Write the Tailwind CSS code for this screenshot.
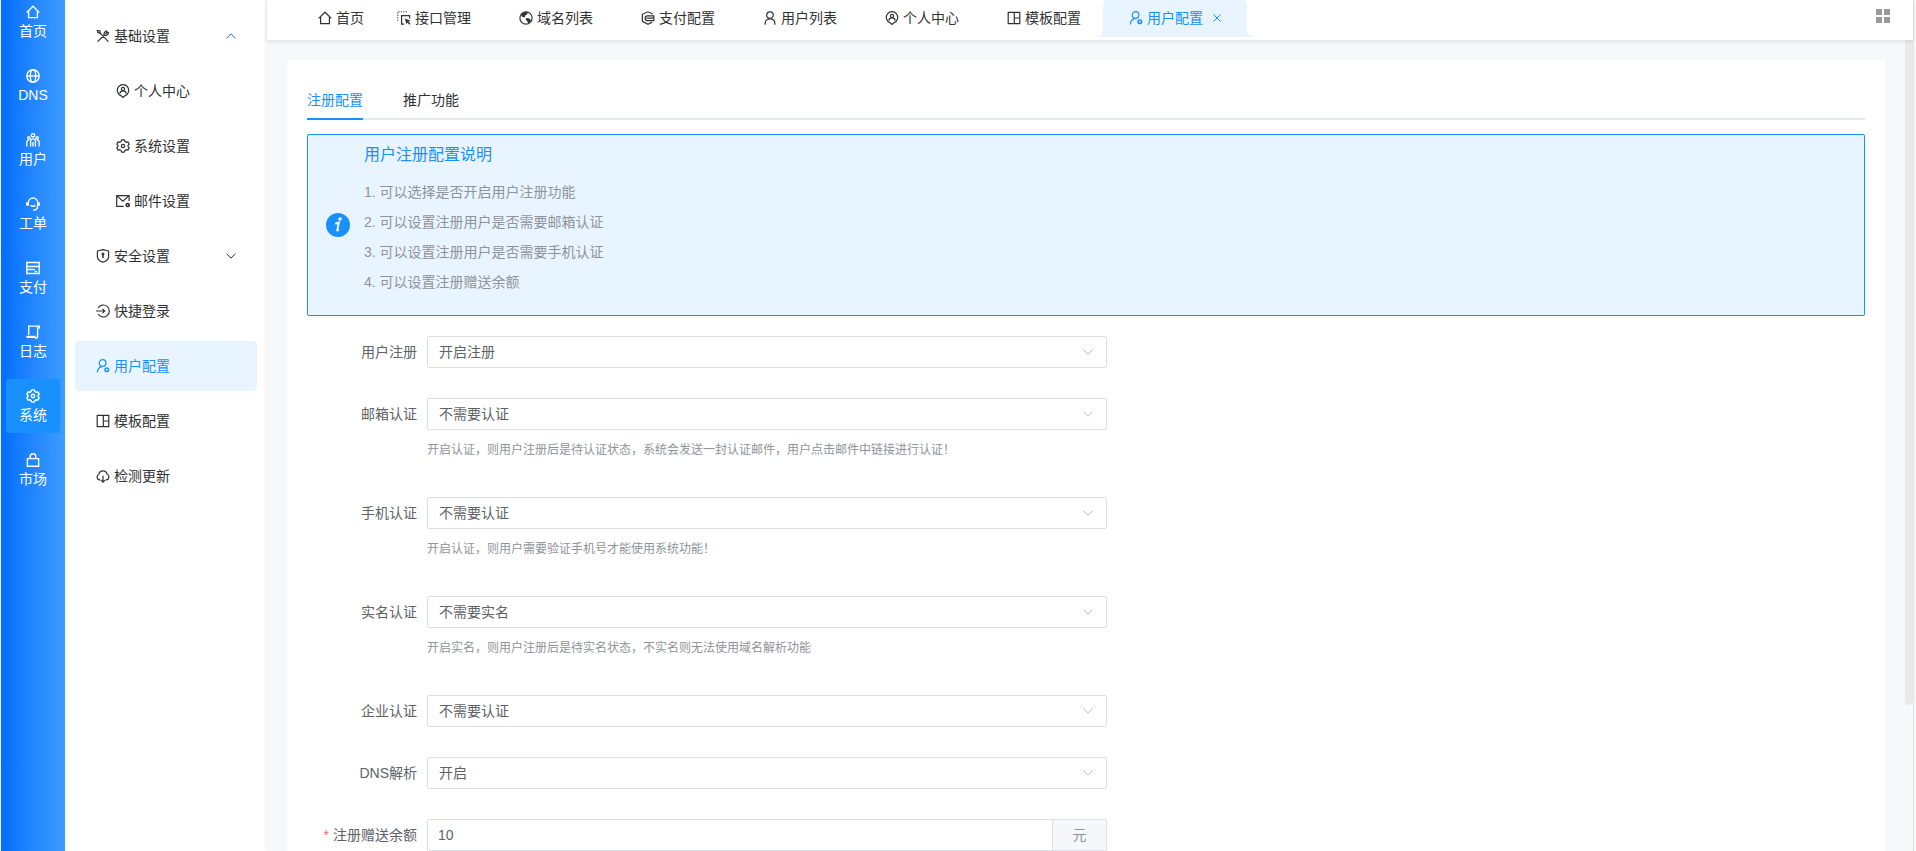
<!DOCTYPE html>
<html lang="zh">
<head>
    <meta charset="UTF-8">
    <meta name="viewport" content="width=device-width, initial-scale=1.0">
    <title>用户配置</title>
    <script src="https://cdn.jsdelivr.net/npm/@tailwindcss/browser@4"></script>
</head>
<body class="font-['Liberation_Sans','Noto_Sans_CJK_SC',sans-serif] text-sm text-[#303133] bg-white">

    <!-- 图标 -->
    <svg class="hidden">
        <symbol id="i-home" viewBox="0 0 14 14"><path d="M.7 7.4L7 1.2l6.300 6.200M2.600 5.800v6.800h8.800V5.800"/></symbol>
        <symbol id="i-globe" viewBox="0 0 14 14"><circle cx="7" cy="7" r="6.2"/><ellipse cx="7" cy="7" rx="2.7" ry="6.2"/><path d="M.8 7h12.4"/></symbol>
        <symbol id="i-users" viewBox="0 0 14 14"><circle cx="7" cy="2.300" r="1.700"/><circle cx="2.900" cy="4.900" r="1.200"/><circle cx="11.100" cy="4.900" r="1.200"/><path d="M4.600 13.600V8.300a2.400 2.400 0 0 1 4.800 0v5.300M7 9v4.600M.8 13.600V9.500c0-1.300.9-2.300 2.300-2.300M13.200 13.600V9.500c0-1.300-.9-2.300-2.300-2.300"/></symbol>
        <symbol id="i-service" viewBox="0 0 14 14"><path d="M2.3 8.800V5.700a4.700 4.700 0 0 1 9.400 0v3.100c0 2.400-1.700 4.300-4.400 4.400M4.600 8.200c1.200 1.300 3.600 1.300 4.800 0"/><path stroke-width="1.800" d="M1 5.200v3.600M13 5.200v3.600"/></symbol>
        <symbol id="i-card" viewBox="0 0 14 14"><path d="M.8 1.500h12.400v11H.8zM.8 5.500h12.400M.8 8.500h8M8.600 10.500h2.400"/></symbol>
        <symbol id="i-log" viewBox="0 0 14 14"><path d="M2.700 10V1.100h10.700v2.600M11.600 1.200v10.200c0 .9-.6 1.700-1.600 1.700"/><path stroke-width="2.200" d="M.4 11.900h9.200"/><path d="M9 13h1.500"/></symbol>
        <symbol id="i-gear" viewBox="0 0 14 14"><path stroke-linejoin="round" d="M5.6.9h2.8l.5 1.6 1.3.8 1.7-.4 1.3 2.4L12 6.4v1.2l1.2 1.1-1.3 2.4-1.7-.4-1.3.8-.5 1.6H5.6l-.5-1.6-1.3-.8-1.7.4L.8 8.7 2 7.6V6.4L.8 5.3l1.3-2.4 1.7.4 1.3-.8z"/><circle cx="7" cy="7" r="1.7"/></symbol>
        <symbol id="i-lock" viewBox="0 0 14 14"><path d="M1.400 5.600h11.200v7.700H1.400zM4.200 5.400V3.600a2.800 2.800 0 0 1 5.600 0v1.800"/></symbol>
        <symbol id="i-tools" viewBox="0 0 14 14"><path d="M3.600 3.600l8.800 9M1.600 12.600l6.600-6.400M8.200 6.200c-.8-1.900.6-4.300 3-4.300M8.200 6.200c1.900.8 4.400-.6 4.400-3M11.200 1.900L10 4.300l2.600-1.100M1.300 1.500l2.500.3.600 2.400-2.500-.5z"/></symbol>
        <symbol id="i-pin" viewBox="0 0 14 14"><path d="M4.800 11.600A5.700 5.700 0 1 1 9.200 11.600L7 13.500z"/><circle cx="7" cy="4.900" r="1.600"/><path d="M3.800 9.600c.4-3.600 6-3.600 6.400 0"/></symbol>
        <symbol id="i-mail" viewBox="0 0 14 14"><path d="M7.800 12.300H.7V1.600h12.400V7M.9 1.900l6 5.200 6-5.200"/><circle cx="11.700" cy="11" r="1.500" stroke-width="1.700"/></symbol>
        <symbol id="i-shield" viewBox="0 0 14 14"><path stroke-linejoin="round" d="M1.400 2L7 .7 12.600 2v6c0 2.600-2.600 4.200-5.600 5.300C4 12.200 1.400 10.600 1.400 8z"/><path d="M7 5v4" stroke-width="1.500"/><circle cx="7" cy="5" r=".9"/></symbol>
        <symbol id="i-login" viewBox="0 0 14 14"><path d="M2.100 4A6 6 0 1 1 2.100 10M0 7h8.400M6.500 4.900L8.700 7 6.500 9.100"/></symbol>
        <symbol id="i-userset" viewBox="0 0 14 14"><circle cx="6.600" cy="4" r="3.300"/><path d="M1.400 13.600c0-3.200 1.600-5.400 4.400-6"/><circle cx="10.800" cy="10.800" r="1.800" stroke-width="1.500"/></symbol>
        <symbol id="i-layout" viewBox="0 0 14 14"><path d="M1.200 1.400h11.600v11.200H1.200zM7.300 1.400v11.200M7.300 7h5.500"/></symbol>
        <symbol id="i-cloud" viewBox="0 0 14 14"><path d="M4.400 10.900H3.600A3 3 0 0 1 2.900 5.200a4.200 4.200 0 0 1 8.200 0A3 3 0 0 1 10.400 10.900H9.600M7 6.800v6.400M5 11.200l2 2 2-2"/></symbol>
        <symbol id="i-user" viewBox="0 0 14 14"><circle cx="7" cy="4.100" r="3.300"/><path d="M2.200 13.700V12c0-5.500 9.600-5.500 9.600 0v1.700"/></symbol>
        <symbol id="i-api" viewBox="0 0 14 14"><path stroke-dasharray="1.200 1.200" stroke-width="1" d="M.8 9.800V.8h9.600"/><path d="M7.200 13.200H4.600V4.600h8v2.800"/><path fill="currentColor" stroke="none" d="M7.800 7.400l6 2.300-2.300.9 2 2.100-1 1-2.100-2.100-.8 2z"/></symbol>
        <symbol id="i-earth" viewBox="0 0 14 14"><circle cx="7" cy="7" r="6.100"/><path fill="currentColor" stroke="none" d="M2 3.600C4 .6 7.500.6 9 1.200L8 3.500 6.400 4.200 6 6 4 6.300 2.800 5.500zM7.200 7l3.300.4 1.500 2-2.600 3.400-1.200-2.600L6.600 8.600z"/></symbol>
        <symbol id="i-pay" viewBox="0 0 14 14"><path d="M11.800 3L7 .8 1.400 3.300v7L7 13.300l4-2.200"/><path d="M12.800 4.800H6.200c-1.400 0-2 1-2 2.200s.6 2.600 2 2.600h6.600zM5.400 7.200h7.400"/></symbol>
        <symbol id="i-down" viewBox="0 0 10 10"><path d="M.5 2.600L5 7.200l4.500-4.600"/></symbol>
        <symbol id="i-close" viewBox="0 0 8 8"><path d="M.5.5l7 7M7.500.5l-7 7"/></symbol>
    </svg>

    <div class="flex h-screen overflow-hidden border-l border-[#e8ecf0] pr-[2px]">

        <!-- 一级菜单 -->
        <nav class="w-16 shrink-0 bg-linear-to-r from-[#006eff] to-[#3c9cff] text-white">
            <div class="-mt-[5px] flex flex-col items-center gap-[10px]">
                <a href="#" class="flex w-[54px] h-[54px] flex-col items-center justify-center rounded gap-[2px] pt-[2px]"><svg class="size-[14px] fill-none stroke-current stroke-[1.4]"><use href="#i-home"/></svg><span class="leading-5">首页</span></a>
                <a href="#" class="flex w-[54px] h-[54px] flex-col items-center justify-center rounded gap-[2px] pt-[2px]"><svg class="size-[14px] fill-none stroke-current stroke-[1.4]"><use href="#i-globe"/></svg><span class="leading-5">DNS</span></a>
                <a href="#" class="flex w-[54px] h-[54px] flex-col items-center justify-center rounded gap-[2px] pt-[2px]"><svg class="size-[14px] fill-none stroke-current stroke-[1.3]"><use href="#i-users"/></svg><span class="leading-5">用户</span></a>
                <a href="#" class="flex w-[54px] h-[54px] flex-col items-center justify-center rounded gap-[2px] pt-[2px]"><svg class="size-[14px] fill-none stroke-current stroke-[1.4]"><use href="#i-service"/></svg><span class="leading-5">工单</span></a>
                <a href="#" class="flex w-[54px] h-[54px] flex-col items-center justify-center rounded gap-[2px] pt-[2px]"><svg class="size-[14px] fill-none stroke-current stroke-[1.4]"><use href="#i-card"/></svg><span class="leading-5">支付</span></a>
                <a href="#" class="flex w-[54px] h-[54px] flex-col items-center justify-center rounded gap-[2px] pt-[2px]"><svg class="size-[14px] fill-none stroke-current stroke-[1.4]"><use href="#i-log"/></svg><span class="leading-5">日志</span></a>
                <a href="#" class="flex w-[54px] h-[54px] flex-col items-center justify-center rounded gap-[2px] pt-[2px] bg-[#1890ff]"><svg class="size-[14px] fill-none stroke-current stroke-[1.4]"><use href="#i-gear"/></svg><span class="leading-5">系统</span></a>
                <a href="#" class="flex w-[54px] h-[54px] flex-col items-center justify-center rounded gap-[2px] pt-[2px]"><svg class="size-[14px] fill-none stroke-current stroke-[1.4]"><use href="#i-lock"/></svg><span class="leading-5">市场</span></a>
            </div>
        </nav>

        <!-- 二级菜单 -->
        <aside class="w-[202px] shrink-0 bg-white px-[10px] pt-[11px]">
            <ul class="flex flex-col gap-[5px]">
                <li><a href="#" class="flex h-[50px] items-center gap-1 rounded pr-[21px] pl-[21px]"><svg class="size-[14px] fill-none stroke-current stroke-[1.2]"><use href="#i-tools"/></svg><span>基础设置</span><svg class="ml-auto size-[10px] rotate-180 fill-none stroke-[#1a6fd0]"><use href="#i-down"/></svg></a></li>
                <li><a href="#" class="flex h-[50px] items-center gap-1 rounded pl-[41px]"><svg class="size-[14px] fill-none stroke-current stroke-[1.2]"><use href="#i-pin"/></svg><span>个人中心</span></a></li>
                <li><a href="#" class="flex h-[50px] items-center gap-1 rounded pl-[41px]"><svg class="size-[14px] fill-none stroke-current stroke-[1.2]"><use href="#i-gear"/></svg><span>系统设置</span></a></li>
                <li><a href="#" class="flex h-[50px] items-center gap-1 rounded pl-[41px]"><svg class="size-[14px] fill-none stroke-current stroke-[1.2]"><use href="#i-mail"/></svg><span>邮件设置</span></a></li>
                <li><a href="#" class="flex h-[50px] items-center gap-1 rounded pr-[21px] pl-[21px]"><svg class="size-[14px] fill-none stroke-current stroke-[1.2]"><use href="#i-shield"/></svg><span>安全设置</span><svg class="ml-auto size-[10px] fill-none stroke-current"><use href="#i-down"/></svg></a></li>
                <li><a href="#" class="flex h-[50px] items-center gap-1 rounded pl-[21px]"><svg class="size-[14px] fill-none stroke-current stroke-[1.2]"><use href="#i-login"/></svg><span>快捷登录</span></a></li>
                <li><a href="#" class="flex h-[50px] items-center gap-1 rounded bg-[#e8f4ff] pl-[21px] text-[#1890ff]"><svg class="size-[14px] fill-none stroke-current stroke-[1.2]"><use href="#i-userset"/></svg><span>用户配置</span></a></li>
                <li><a href="#" class="flex h-[50px] items-center gap-1 rounded pl-[21px]"><svg class="size-[14px] fill-none stroke-current stroke-[1.2]"><use href="#i-layout"/></svg><span>模板配置</span></a></li>
                <li><a href="#" class="flex h-[50px] items-center gap-1 rounded pl-[21px]"><svg class="size-[14px] fill-none stroke-current stroke-[1.2]"><use href="#i-cloud"/></svg><span>检测更新</span></a></li>
            </ul>
        </aside>

        <div class="flex min-w-0 flex-1 flex-col border-r border-[#e4e4e4] bg-[#f6f8fa] shadow-[0_0_4px_rgba(0,21,41,0.1)]">

            <!-- 顶部标签栏 -->
            <header class="relative z-10 flex h-10 shrink-0 items-start justify-between bg-white pr-[23px] pl-[51px] shadow-[0_1px_4px_rgba(0,21,41,0.12)]">
                <div class="flex gap-8 text-[#333]">
                    <a href="#" class="flex h-[37px] w-[47px] items-center gap-1 pb-[2px]"><svg class="size-[14px] fill-none stroke-current stroke-[1.2]"><use href="#i-home"/></svg><span>首页</span></a>
                    <a href="#" class="flex h-[37px] w-[90px] items-center gap-1 pb-[2px]"><svg class="size-[14px] fill-none stroke-current stroke-[1.2]"><use href="#i-api"/></svg><span>接口管理</span></a>
                    <a href="#" class="flex h-[37px] w-[90px] items-center gap-1 pb-[2px]"><svg class="size-[14px] fill-none stroke-current stroke-[1.2]"><use href="#i-earth"/></svg><span>域名列表</span></a>
                    <a href="#" class="flex h-[37px] w-[90px] items-center gap-1 pb-[2px]"><svg class="size-[14px] fill-none stroke-current stroke-[1.2]"><use href="#i-pay"/></svg><span>支付配置</span></a>
                    <a href="#" class="flex h-[37px] w-[90px] items-center gap-1 pb-[2px]"><svg class="size-[14px] fill-none stroke-current stroke-[1.2]"><use href="#i-user"/></svg><span>用户列表</span></a>
                    <a href="#" class="flex h-[37px] w-[90px] items-center gap-1 pb-[2px]"><svg class="size-[14px] fill-none stroke-current stroke-[1.2]"><use href="#i-pin"/></svg><span>个人中心</span></a>
                    <a href="#" class="flex h-[37px] w-[90px] items-center gap-1 pb-[2px]"><svg class="size-[14px] fill-none stroke-current stroke-[1.2]"><use href="#i-layout"/></svg><span>模板配置</span></a>
                    <div class="relative -mx-8 flex h-[37px] items-center px-8 pb-[2px] text-[#1890ff]">
                        <div class="absolute inset-x-[6px] -top-[2px] bottom-0 rounded-t-lg bg-[#e8f4ff]"></div>
                        <svg class="absolute bottom-0 left-0 size-[6px] fill-[#e8f4ff]" viewBox="0 0 6 6"><path d="M6 0v6H0V5C3 5 6 3 6 0z"/></svg>
                        <svg class="absolute right-0 bottom-0 size-[6px] fill-[#e8f4ff]" viewBox="0 0 6 6"><path d="M0 0v6h6V5C3 5 0 3 0 0z"/></svg>
                        <a href="#" class="relative flex items-center gap-1"><svg class="size-[14px] fill-none stroke-current stroke-[1.2]"><use href="#i-userset"/></svg><span>用户配置</span></a>
                        <button type="button" aria-label="关闭" class="relative ml-[10px]"><svg class="size-2 fill-none stroke-current"><use href="#i-close"/></svg></button>
                    </div>
                </div>
                <button type="button" aria-label="更多" class="mt-[9px] grid grid-cols-2 gap-[2px]">
                    <i class="size-[6px] bg-[#999]"></i><i class="size-[6px] bg-[#999]"></i>
                    <i class="size-[6px] bg-[#999]"></i><i class="size-[6px] bg-[#999]"></i>
                </button>
            </header>

            <!-- 内容区域 -->
            <div class="relative min-h-0 flex-1 overflow-hidden pt-5 pr-7 pl-5">
                <div class="absolute top-0 right-0 h-[82%] w-2 rounded-b bg-[#e9e9e9]"></div>

                <main class="bg-white p-5 pb-10">
                    <div class="flex h-10 gap-10 border-b-2 border-[#e4e7ed] leading-10">
                        <a href="#" class="h-10 border-b-2 border-[#1890ff] text-[#1890ff]">注册配置</a>
                        <a href="#" class="h-10">推广功能</a>
                    </div>

                    <!-- 说明 -->
                    <section class="mt-[14px] flex h-[182px] items-center gap-[14px] rounded-xs border border-[#1890ff] bg-[#e8f4ff] px-[18px] text-[#909399]">
                        <svg class="size-6 shrink-0" viewBox="0 0 24 24"><circle cx="12" cy="12" r="12" fill="#1890ff"/><circle cx="14" cy="6" r="1.700" fill="#fff"/><path d="M9.300 10.500c1.200-.3 2.400-.9 3.700-1L11.200 17c-.2 1 .7.600 1.700-.5M9.300 10.600h1.900" fill="none" stroke="#fff" stroke-width="1.800"/></svg>
                        <div class="h-full pt-2">
                            <h2 class="text-base text-[#1890ff]">用户注册配置说明</h2>
                            <ol class="mt-[10px] leading-[30px]">
                                <li>1. 可以选择是否开启用户注册功能</li>
                                <li>2. 可以设置注册用户是否需要邮箱认证</li>
                                <li>3. 可以设置注册用户是否需要手机认证</li>
                                <li>4. 可以设置注册赠送余额</li>
                            </ol>
                        </div>
                    </section>

                    <!-- 表单 -->
                    <form class="mt-5 flex max-w-[800px] flex-col gap-[30px] text-[#606266]">
                        <div class="flex">
                            <label for="reg" class="w-[120px] shrink-0 pr-[10px] text-right leading-8">用户注册</label>
                            <div class="relative flex-1">
                                <select id="reg" class="block h-8 w-full appearance-none rounded-xs border border-[#dcdfe6] bg-white px-[11px]"><option>开启注册</option></select>
                                <svg class="pointer-events-none absolute top-[11px] right-[14px] size-[10px] fill-none stroke-[#b4b8c0]"><use href="#i-down"/></svg>
                            </div>
                        </div>
                        <div class="flex">
                            <label for="mail" class="w-[120px] shrink-0 pr-[10px] text-right leading-8">邮箱认证</label>
                            <div class="relative flex-1">
                                <select id="mail" class="block h-8 w-full appearance-none rounded-xs border border-[#dcdfe6] bg-white px-[11px]"><option>不需要认证</option></select>
                                <svg class="pointer-events-none absolute top-[11px] right-[14px] size-[10px] fill-none stroke-[#b4b8c0]"><use href="#i-down"/></svg>
                                <p class="h-[37px] text-xs leading-10 text-[#909399]">开启认证，则用户注册后是待认证状态，系统会发送一封认证邮件，用户点击邮件中链接进行认证！</p>
                            </div>
                        </div>
                        <div class="flex">
                            <label for="phone" class="w-[120px] shrink-0 pr-[10px] text-right leading-8">手机认证</label>
                            <div class="relative flex-1">
                                <select id="phone" class="block h-8 w-full appearance-none rounded-xs border border-[#dcdfe6] bg-white px-[11px]"><option>不需要认证</option></select>
                                <svg class="pointer-events-none absolute top-[11px] right-[14px] size-[10px] fill-none stroke-[#b4b8c0]"><use href="#i-down"/></svg>
                                <p class="h-[37px] text-xs leading-10 text-[#909399]">开启认证，则用户需要验证手机号才能使用系统功能！</p>
                            </div>
                        </div>
                        <div class="flex">
                            <label for="real" class="w-[120px] shrink-0 pr-[10px] text-right leading-8">实名认证</label>
                            <div class="relative flex-1">
                                <select id="real" class="block h-8 w-full appearance-none rounded-xs border border-[#dcdfe6] bg-white px-[11px]"><option>不需要实名</option></select>
                                <svg class="pointer-events-none absolute top-[11px] right-[14px] size-[10px] fill-none stroke-[#b4b8c0]"><use href="#i-down"/></svg>
                                <p class="h-[37px] text-xs leading-10 text-[#909399]">开启实名，则用户注册后是待实名状态，不实名则无法使用域名解析功能</p>
                            </div>
                        </div>
                        <div class="flex">
                            <label for="company" class="w-[120px] shrink-0 pr-[10px] text-right leading-8">企业认证</label>
                            <div class="relative flex-1">
                                <select id="company" class="block h-8 w-full appearance-none rounded-xs border border-[#dcdfe6] bg-white px-[11px]"><option>不需要认证</option></select>
                                <svg class="pointer-events-none absolute top-[11px] right-[14px] size-[10px] fill-none stroke-[#b4b8c0]"><use href="#i-down"/></svg>
                            </div>
                        </div>
                        <div class="flex">
                            <label for="dns" class="w-[120px] shrink-0 pr-[10px] text-right leading-8">DNS解析</label>
                            <div class="relative flex-1">
                                <select id="dns" class="block h-8 w-full appearance-none rounded-xs border border-[#dcdfe6] bg-white px-[11px]"><option>开启</option></select>
                                <svg class="pointer-events-none absolute top-[11px] right-[14px] size-[10px] fill-none stroke-[#b4b8c0]"><use href="#i-down"/></svg>
                            </div>
                        </div>
                        <div class="flex">
                            <label for="gift" class="w-[120px] shrink-0 pr-[10px] text-right leading-8"><span class="mr-1 text-[#f56c6c]">*</span>注册赠送余额</label>
                            <div class="flex h-8 flex-1 rounded-xs border border-[#dcdfe6]">
                                <input id="gift" type="text" value="10" class="min-w-0 flex-1 px-[10px]">
                                <span class="w-[54px] border-l border-[#dcdfe6] bg-[#f5f7fa] text-center leading-[30px] text-[#909399]">元</span>
                            </div>
                        </div>
                    </form>
                </main>
            </div>
        </div>
    </div>

</body>
</html>
